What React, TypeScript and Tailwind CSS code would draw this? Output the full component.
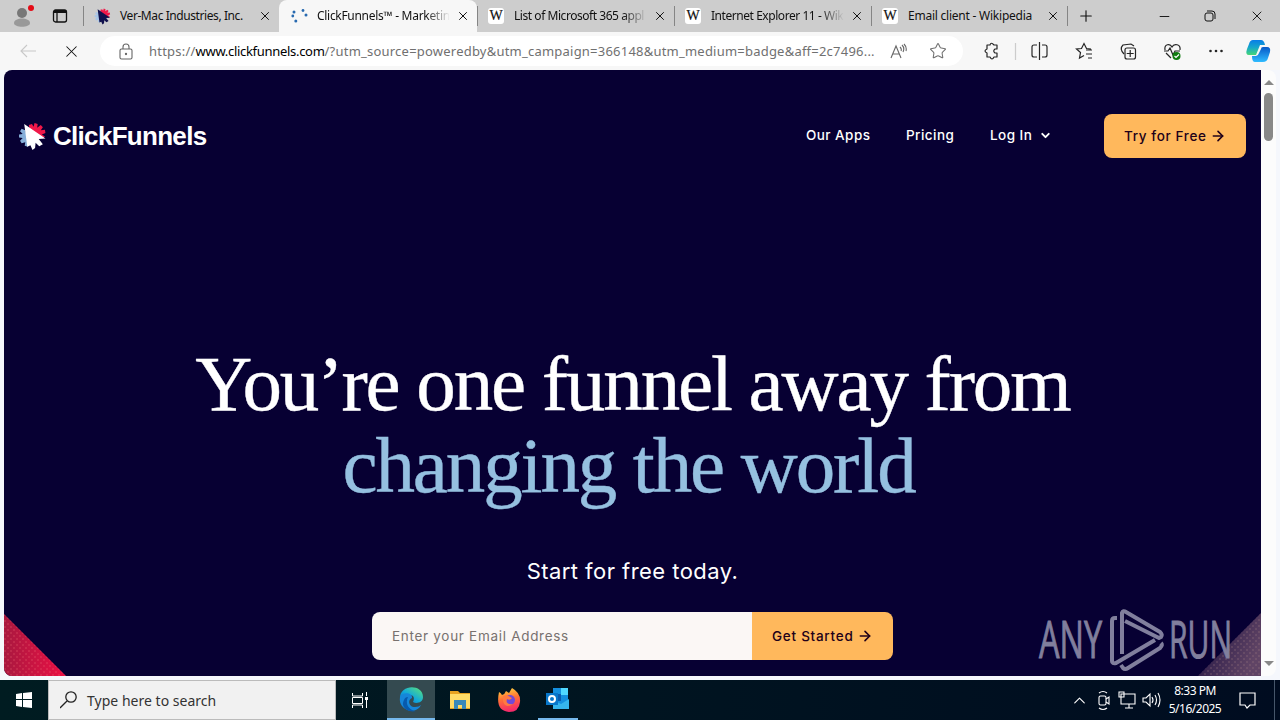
import React from 'react';
import { X, Plus, Minus, Star, ArrowRight, ChevronDown, ChevronUp } from 'lucide-react';

const tabs = [
  { title: 'Ver-Mac Industries, Inc.', icon: 'click', width: 'w-[196px]', track: 'tracking-[-0.42px]' },
  { title: 'ClickFunnels™ - Marketin', icon: 'dots', width: 'w-[198px]', active: true, fade: true, track: 'tracking-[-0.3px]' },
  { title: 'List of Microsoft 365 appl', icon: 'wiki', width: 'w-[197px]', fade: true, track: 'tracking-[-0.45px]' },
  { title: 'Internet Explorer 11 - Wik', icon: 'wiki', width: 'w-[197px]', fade: true, track: 'tracking-[-0.45px]' },
  { title: 'Email client - Wikipedia', icon: 'wiki', width: 'w-[196px]', track: 'tracking-[-0.23px]' },
];

function Cursor({ size, arrow, gear }: { size: number; arrow: string; gear: string }) {
  return (
    <svg width={size} height={size} viewBox="0 0 28 28" className="shrink-0">
      <path d="m11 6-.5-3 3-1 1.500 2.500L16 1l3 1-.5 3.500L22 3l2 2-2 3 4-.5.5 3-3.500 1.500 3 2-2 2Z" fill="#f01849" />
      <path d="M7 8 3.500 6.500 2 9l2.500 2.500L1 12v3l3.500.5L2 18l1.500 2.500 3.500-1L6.500 23l3 1 1-3Z" fill={gear} />
      <path d="m6 2 20.500 14-6.500.5 4 5-3.500 2-3.500-3.500-.5 5-2.500 2-2-4.500-3 1.500Z" fill={arrow} />
    </svg>
  );
}

function TabIcon({ icon }: { icon: string }) {
  if (icon === 'click') return <Cursor size={17} arrow="#10114d" gear="#a8c6e8" />;
  if (icon === 'dots') {
    return (
      <svg width="17" height="17" viewBox="0 0 17 17" fill="#286ab0" className="shrink-0">
        <circle cx="3" cy="4" r="1.5" /><circle cx="1.8" cy="8" r="1.4" />
        <circle cx="4.8" cy="13" r="1.5" /><circle cx="12" cy="2.5" r="1.4" /><circle cx="15" cy="7" r="1.5" />
      </svg>
    );
  }
  return (
    <span className="flex size-4 shrink-0 items-center justify-center rounded-[3px] bg-white font-['Liberation_Serif',serif] text-[14px] leading-none [-webkit-text-stroke:0.2px]">
      W
    </span>
  );
}

function TabBar() {
  return (
    <div className="flex h-8 items-center bg-[#cdcdcd]">
      <div className="flex w-[83px] shrink-0 items-center gap-4 pl-3">
        <svg width="24" height="24" viewBox="0 0 24 24">
          <circle cx="10" cy="9" r="5" fill="#777" />
          <path d="M2 19c0-6 16-6 16 0 0 5-16 5-16 0Z" fill="#999" />
          <circle cx="19" cy="4" r="3" fill="#e40b16" />
        </svg>
        <svg width="16" height="16" viewBox="0 0 16 16" fill="none" stroke="#111" strokeWidth="1.3">
          <rect x="1.5" y="2" width="13" height="12" rx="2" />
          <path d="M2 3.5h12" strokeWidth="3" /><path d="M5 5v9" />
        </svg>
      </div>
      {tabs.map((tab) => (
        <div
          key={tab.title}
          className={`${tab.width} flex shrink-0 items-center ${tab.active ? 'h-8 rounded-t-lg bg-[#f7f7f7] pl-3' : 'h-5 border-l border-[#858585] pl-[10px]'} pr-[7px]`}
        >
          <TabIcon icon={tab.icon} />
          <span className={`ml-[9px] min-w-0 flex-1 text-[12px] whitespace-nowrap ${tab.track} ${tab.fade ? '[mask-image:linear-gradient(to_right,black_82%,transparent)]' : ''} ${tab.icon === 'wiki' ? 'pl-px' : ''}`}>
            {tab.title}
          </span>
          <X size={14} strokeWidth={1.7} className="ml-1.5 shrink-0" />
        </div>
      ))}
      <div className="flex h-5 items-center border-l border-[#858585] pl-[9px]">
        <Plus size={18} strokeWidth={1.5} />
      </div>
      <div className="ml-auto flex items-center pr-[15px]">
        <Minus size={15} strokeWidth={1.5} className="mr-[32px]" />
        <svg width="12" height="12" viewBox="0 0 12 12" fill="none" stroke="#111" className="mr-[33px]">
          <rect x="1" y="3" width="8" height="8" rx="2" /><path d="M3 1h5q3 0 3 3v5" />
        </svg>
        <X size={16} strokeWidth={1.4} />
      </div>
    </div>
  );
}

function Toolbar() {
  return (
    <div className="flex h-[38px] items-center bg-[#f7f7f7]">
      <div className="flex w-[100px] shrink-0 items-center">
        <svg width="16" height="14" viewBox="0 0 16 14" fill="none" stroke="#c8c8c8" strokeWidth="1.1" className="ml-5">
          <path d="M16 7H1m6-6L1 7l6 6" />
        </svg>
        <X size={19} strokeWidth={1.3} className="ml-[26px]" />
      </div>
      <div className="flex h-[30px] w-[863px] shrink-0 items-center rounded-full bg-white text-[#707070]">
        <svg width="14" height="17" viewBox="0 0 14 17" fill="none" stroke="#666" strokeWidth="1.1" className="ml-[19px] shrink-0">
          <rect x="1" y="6" width="12" height="10" rx="1.5" /><path d="M4 6V4a3 3 0 0 1 6 0v2" />
          <circle cx="7" cy="11" r=".6" fill="#666" />
        </svg>
        <span className="ml-4 w-[731px] pt-px text-[13px] tracking-[0.22px] whitespace-nowrap">
          https://<span className="tracking-[-0.3px] text-black">www.clickfunnels.com</span>/?utm_source=poweredby&amp;utm_campaign=366148&amp;utm_medium=badge&amp;aff=2c7496...
        </span>
        <svg width="17" height="17" viewBox="0 0 17 17" fill="none" stroke="#666" strokeWidth="1.1" className="ml-[10px]">
          <path d="M1 15 6 3l5 12M3 11h6M10 4q2 2 1 4m1-6q3 3 1 7m1-8q3 3 2 7" />
        </svg>
        <Star size={18} strokeWidth={1.4} className="ml-[22px]" />
      </div>
      <svg width="317" height="38" viewBox="963 32 317 38" fill="none" stroke="#252525" strokeWidth="1.2" className="shrink-0">
        <path d="M988 45h2q1-3.500 4 0h3v4h-2q-2.500 2 0 4h2v4h-3q-2 4-4 0h-3v-4q-4-2 0-4v-4Z" strokeLinejoin="round" />
        <path d="M1015.5 43v17" stroke="#ccc" />
        <path d="M1037 45h-3q-2 0-2 2v8q0 2 2 2h3m5-12h3q2 0 2 2v8q0 2-2 2h-3m-2.500-15v18" />
        <path d="m1091 49-4.500-.5-2.500-5-2.500 5-5 .5 4 3.500-1 5.500 4.500-2.500M1086 50h6m-6 4h6m-4 4h4" />
        <path d="M1124 54q-5-5-1-9l8-1 3 2" />
        <rect x="1125" y="48" width="10.500" height="11" rx="2" /><path d="M1130.200 50v7m-3.500-3.500h7" />
        <path d="M1165 50c-1-6 5-7 7-3 2-4 9-3 8 3M1164 51h4l2-3 3 7 2-4h5m-14 2 5 5" />
        <circle cx="1176.500" cy="56" r="4" fill="#107c10" stroke="none" /><path d="m1174.500 56 1.500 1.500 3-3" stroke="#fff" />
        <g fill="#252525" stroke="none"><circle cx="1210.500" cy="51" r="1.300" /><circle cx="1216" cy="51" r="1.300" /><circle cx="1221.500" cy="51" r="1.300" /></g>
        <defs>
          <linearGradient id="copilotLeft" x2="0" y2="1"><stop stopColor="#087de8" /><stop offset=".5" stopColor="#16a7ca" /><stop offset="1" stopColor="#45d776" /></linearGradient>
          <linearGradient id="copilotRight" x2="0" y2="1"><stop stopColor="#0758c7" /><stop offset="1" stopColor="#30bcff" /></linearGradient>
        </defs>
        <path d="M1253 40h8q3 0 4 5h-5l-4 10h-7q-4 0-2-6l2-5q1-4 4-4Z" fill="url(#copilotLeft)" stroke="none" />
        <path d="M1263 47h4q4 0 3 5l-2 6q-1 4-5 4h-8q-3 0-3-6h4q2 0 3-3l2-4q0-2 2-2Z" fill="url(#copilotRight)" stroke="none" />
      </svg>
    </div>
  );
}

function Watermark() {
  return (
    <svg width="196" height="64" viewBox="0 0 196 64" className="absolute right-[26px] bottom-1 overflow-visible">
      <g fill="#817f9d" stroke="#817f9d" strokeWidth="1" fontFamily="'Open Sans', sans-serif" fontSize="51">
        <text x="0" y="50" textLength="63" lengthAdjust="spacingAndGlyphs">ANY</text>
        <text x="130" y="50" textLength="63" lengthAdjust="spacingAndGlyphs">RUN</text>
      </g>
      <g fill="none" stroke="#817f9d" strokeWidth="4" strokeLinejoin="round">
        <path d="M78 10h-2q-3 0-3 3v40q0 3 4 2l39-23" />
        <path d="M83 46V5q1-3 4-1l34 20q3 3 1 5l-2 1-34-17" />
        <path d="m82 57 2 3q2 2 5 0l32-20q3-3 1-5" />
      </g>
    </svg>
  );
}

function Website() {
  return (
    <div className="flex h-[610px] bg-[#f5f7fc] pl-1">
      <main className="relative h-[606px] w-[1257px] shrink-0 overflow-hidden rounded-l-lg bg-[#070033] font-['Inter',sans-serif] text-white">
        <header className="flex h-[132px] items-center pr-[15px] pl-[14px] text-[13.5px] font-medium tracking-[0.45px]">
          <Cursor size={29} arrow="#fff" gear="#87afd9" />
          <span className="ml-[6px] font-['Liberation_Sans',sans-serif] text-[26px] font-bold tracking-[-0.7px]">ClickFunnels</span>
          <nav className="ml-auto flex items-center pb-px">
            <span className="mr-[35px] w-[65px]">Our Apps</span>
            <span className="mr-[35px] w-[49px]">Pricing</span>
            <span className="w-[49px]">Log In</span>
            <ChevronDown size={13} strokeWidth={3.5} />
          </nav>
          <button className="ml-[52px] flex h-11 w-[142px] items-center rounded-lg bg-[#ffb85c] pl-5 tracking-[0.63px] text-[#210019]">
            <span className="w-[86px] text-left">Try for Free</span> <ArrowRight size={16} strokeWidth={2.4} />
          </button>
        </header>
        <section className="flex flex-col items-center pt-[141px]">
          <h1 className="text-center font-['Liberation_Serif',serif] text-[79px] leading-[82px] tracking-[-2.1px] whitespace-nowrap [-webkit-text-stroke:0.4px]">
            You’re one funnel away from<br /><span className="pr-2 text-[#95c0e0]">changing the world</span>
          </h1>
          <p className="mt-[48px] text-[22px] leading-8 tracking-[0.45px]">Start for free today.</p>
          <form className="mt-[25px] flex h-12 w-[521px] overflow-hidden rounded-lg text-[13.5px]">
            <div className="flex w-[380px] items-center bg-[#fbf7f5] pl-5 tracking-[0.7px] text-[#78716f]">Enter your Email Address</div>
            <button type="button" className="flex flex-1 items-center bg-[#ffb85c] pl-5 font-medium tracking-[0.73px] text-[#210019]">
              <span className="w-[85px] text-left">Get Started</span> <ArrowRight size={16} strokeWidth={2.4} />
            </button>
          </form>
        </section>
        <svg width="62" height="62" className="absolute bottom-0 left-0">
          <defs><pattern id="redDots" width="6" height="6" patternUnits="userSpaceOnUse"><circle cx="1" cy="1" r=".8" fill="#ee6b74" /><circle cx="4" cy="4" r=".8" fill="#ee6b74" /></pattern>
            <linearGradient id="red"><stop stopColor="#a9183f" /><stop offset="1" stopColor="#ec1045" /></linearGradient></defs>
          <path d="M0 0 62 62H0Z" fill="url(#red)" /><path d="M0 0 62 62H0Z" fill="url(#redDots)" opacity=".5" />
        </svg>
        <svg width="63" height="63" className="absolute right-0 bottom-0">
          <defs><pattern id="tanDots" width="6" height="6" patternUnits="userSpaceOnUse"><circle cx="1" cy="1" r=".8" fill="#b18b87" /><circle cx="4" cy="4" r=".8" fill="#b18b87" /></pattern>
            <linearGradient id="violet" y2=".5"><stop stopColor="#160b3c" /><stop offset="1" stopColor="#604465" /></linearGradient></defs>
          <path d="M63 0v63H0Z" fill="url(#violet)" /><path d="M63 0v63H0Z" fill="url(#tanDots)" opacity=".45" />
        </svg>
        <Watermark />
      </main>
      <div className="flex h-[606px] w-[15px] flex-col items-center rounded-r-lg bg-[#fcfcfc] pt-[10px] pb-[10px]">
        <i className="border-x-5 border-b-5 border-x-transparent border-b-[#888]" />
        <div className="mt-2 h-12 w-[9px] rounded-full bg-[#888]" />
        <i className="mt-auto border-x-5 border-t-5 border-x-transparent border-t-[#888]" />
      </div>
    </div>
  );
}

function EdgeIcon() {
  return (
    <svg width="26" height="26" viewBox="0 0 26 26">
      <defs><linearGradient id="edge" x1="0" y1="1" x2="1" y2="0"><stop stopColor="#096dcd" /><stop offset=".45" stopColor="#12a9da" /><stop offset="1" stopColor="#5de576" /></linearGradient></defs>
      <path d="M2 12C2-2 25-2 25 11c0 6-7 7-10 5q3-7-4-7-6 0-9 5Z" fill="url(#edge)" />
      <path d="M2 11c3-6 13-4 12 1-5 2-3 9 3 9q4 0 6-2c-3 7-14 8-19 1-3-4-2-8-2-9Z" fill="#1686d9" />
      <path d="M10 11c-3 6 0 13 8 14-8 2-16-4-12-11q1-3 4-3Z" fill="#075aad" />
    </svg>
  );
}

function Taskbar() {
  return (
    <footer className="flex h-10 items-center bg-[linear-gradient(90deg,#001c21,#001420_50%,#000c20)] text-white">
      <div className="flex h-full w-12 items-center justify-center">
        <svg width="16" height="16" viewBox="0 0 16 16" fill="white"><path d="m0 2 6-1v6H0Zm7-1 9-1v7H7ZM0 8h6v7l-6-1Zm7 0h9v8l-9-1Z" /></svg>
      </div>
      <div className="flex h-full w-[288px] items-center border border-[#bbb] bg-[#f1f1f1] pl-[11px] text-[#333]">
        <svg width="18" height="18" viewBox="0 0 18 18" fill="none" stroke="#222" strokeWidth="1.3"><circle cx="11" cy="6" r="5.200" /><path d="m7 10-7 7" /></svg>
        <span className="ml-[9px] text-[14px] tracking-[0.02px]">Type here to search</span>
      </div>
      <div className="flex h-full w-[51px] items-center justify-center pr-1">
        <svg width="16" height="17" viewBox="0 0 16 17" fill="none" stroke="white"><path d="M.5 1v3h10V1M.5 16v-3h10v3M.5 5.500h10v6H.5ZM14.500 0v4m0 4v8" /><path d="M13 5h3v3h-3Z" fill="white" stroke="none" /></svg>
      </div>
      <div className="flex h-full w-12 items-center justify-center border-b-2 border-[#76b9ed] bg-[#344a50]"><EdgeIcon /></div>
      <div className="flex h-full w-[49px] items-center justify-center">
        <svg width="22" height="22" viewBox="0 0 22 22"><path d="M1 2h8l2 2h10v16H1Z" fill="#e7a320" /><path d="M1 5h20v14H1Z" fill="#ffdc67" /><path d="M5 11h12v9h-4v-4H9v4H5Z" fill="#3989b9" /></svg>
      </div>
      <div className="flex h-full w-[49px] items-center justify-center">
        <svg width="24" height="26" viewBox="0 0 24 26"><defs><linearGradient id="fox" x2=".2" y2="1"><stop stopColor="#ffe03f" /><stop offset=".5" stopColor="#ff7135" /><stop offset="1" stopColor="#f52b69" /></linearGradient></defs><path d="M2 5q2 1 3 3 3-1 4-4l3 2 3-5q9 5 8 14-1 10-11 10Q-2 24 2 5Z" fill="url(#fox)" /><circle cx="13" cy="13" r="5" fill="#7149d8" /><path d="M6 9q4-2 7 1l2 1q-2 3-5 1-2 6 6 5-8 5-10-3Z" fill="#ff7a40" /></svg>
      </div>
      <div className="ml-[5px] flex h-full w-10 items-center justify-center border-b-2 border-[#76b9ed]">
        <svg width="24" height="24" viewBox="0 0 24 24"><path d="M7 1h15v20H7Z" fill="#1490df" /><path d="M15 1h7v7h-7Z" fill="#50d9ff" /><path d="M7 7h8v7H7Z" fill="#0a5bad" /><path d="m7 13 8 4 8-5v10H7Z" fill="#36b6ed" /><path d="M0 6h12v12H0Z" fill="#0877ca" /><circle cx="6" cy="12" r="3" fill="none" stroke="white" strokeWidth="2" /></svg>
      </div>
      <div className="ml-auto flex items-center">
        <ChevronUp size={19} strokeWidth={1.4} />
        <svg width="90" height="24" viewBox="0 0 90 24" fill="none" stroke="white" strokeWidth="1.1" className="-ml-[2px]">
          <rect x="12" y="8" width="7" height="9" rx="1.500" /><path d="m19 11 3-2v7l-3-2M12 5q4-3 8 0m-8 15q4 3 8 0" />
          <path d="M34 6h14v10H34Zm8 10v4m-4 0h8M32 4h5v5h-5Z" />
          <path d="M56 10h3l4-4v12l-4-4h-3Zm9-1q2 3 0 6m3-8q3 5 0 10m3-12q4 7 0 14" />
        </svg>
        <div className="-ml-[17px] w-[70px] text-center text-[12px] leading-[18px] tracking-[-0.5px]">8:33 PM<br />5/16/2025</div>
        <svg width="17" height="17" viewBox="0 0 17 17" fill="none" stroke="white" strokeWidth="1.2" className="mr-[18px] ml-[9px]"><path d="M1 1h15v12h-5l-3 3-2-3H1Z" /></svg>
        <div className="h-10 w-[6px] border-l border-[#46566a]" />
      </div>
    </footer>
  );
}

export default function App() {
  return (
    <div className="h-[720px] w-[1280px] overflow-hidden font-['Noto_Sans',sans-serif] text-[#111]">
      <TabBar />
      <Toolbar />
      <Website />
      <Taskbar />
    </div>
  );
}
